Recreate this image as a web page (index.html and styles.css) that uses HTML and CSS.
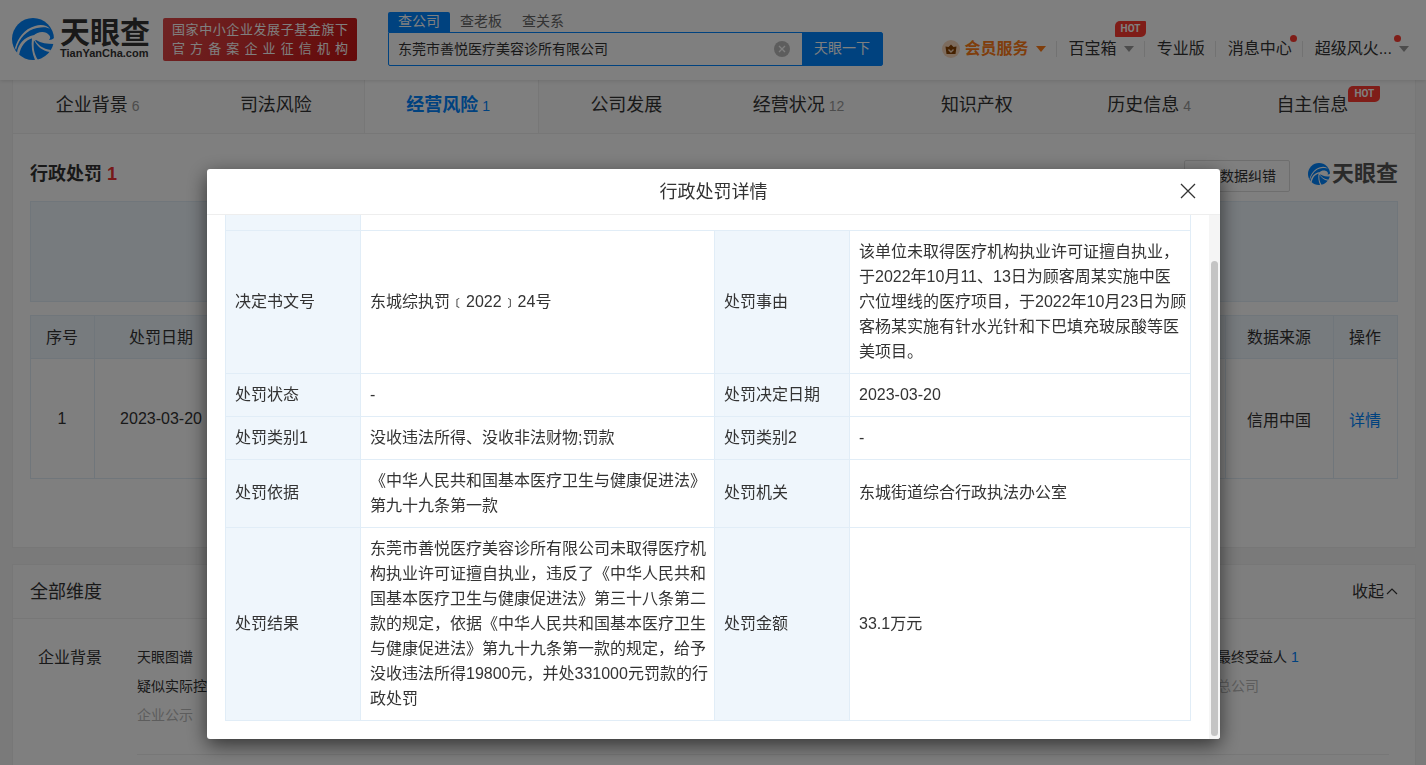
FILE: index.html
```
<!DOCTYPE html>
<html lang="zh-CN">
<head>
    <meta charset="UTF-8">
    <meta name="viewport" content="width=device-width, initial-scale=1.0">
    <title>行政处罚 - 天眼查</title>
    <link rel="stylesheet" href="styles.css">
</head>
<body>
    <svg class="symbols" aria-hidden="true">
        <symbol id="swirl" viewBox="0 0 42 42">
            <circle cx="21" cy="21" r="21" fill="#0084ff"/>
            <path d="M4 32C7 20 15 12 25 10c6-1 10-1 13 1-3-4-9-5-15-3C12 11 6 20 3 30z" fill="#fff"/>
            <path d="M21 18c5-5 13-5 16-1 2 2 1 4 0 5 2 0 4-1 5-2v6c-7 0-13-1-18-4-1 1-2 1-3 0z" fill="#fff"/>
            <path d="M21 19c4 8 10 12 18 13l-1 2c-8-1-13-6-16-12-1 7 0 14 4 20h-3c-3-7-4-14-3-22z" fill="#fff"/>
            <path d="M22 17C12 19 6 26 5 35l2 2c2-9 6-15 14-17z" fill="#fff"/>
        </symbol>
    </svg>

    <header class="header">
        <a class="logo" href="/">
            <svg class="logo-mark"><use href="#swirl"/></svg>
            <span class="logo-text">
                <b>天眼查</b>
                <small>TianYanCha.com</small>
            </span>
        </a>
        <div class="slogan">
            <p>国家中小企业发展子基金旗下</p>
            <p>官方备案企业征信机构</p>
        </div>
        <form class="search">
            <div class="search-tabs">
                <a class="active" href="#">查公司</a>
                <a href="#">查老板</a>
                <a href="#">查关系</a>
            </div>
            <div class="search-box">
                <input type="text" aria-label="搜索公司" value="东莞市善悦医疗美容诊所有限公司">
                <button class="clear" type="button" aria-label="清除">
                    <svg viewBox="0 0 16 16"><circle cx="8" cy="8" r="8" fill="#bbb"/><path d="M5 5l6 6M11 5l-6 6" stroke="#fff" stroke-width="1.3"/></svg>
                </button>
                <button class="submit" type="submit">天眼一下</button>
            </div>
        </form>
        <nav class="user-nav">
            <a class="vip" href="#">
                <svg class="crown" viewBox="0 0 18 18"><circle cx="9" cy="9" r="9" fill="#fbd9bd"/><path d="M3.500 6.500l3 .5L9 4.500 11.500 7l3-.5-1 7.500h-9z" fill="#8a4300"/><path d="M6.500 9.500L9 12l2.500-2.500" fill="none" stroke="#fbd9bd" stroke-width="1.400"/></svg>
                会员服务<i class="caret"></i>
            </a>
            <a href="#">百宝箱<i class="caret"></i><em class="hot">HOT</em></a>
            <a href="#">专业版</a>
            <a href="#">消息中心<i class="dot"></i></a>
            <a class="account" href="#">超级风火...<i class="caret"></i><i class="dot"></i></a>
        </nav>
    </header>

    <main>
        <section class="card">
            <nav class="tabs">
                <a href="#">企业背景<span>6</span></a>
                <a href="#">司法风险</a>
                <a class="active" href="#">经营风险<span>1</span></a>
                <a href="#">公司发展</a>
                <a href="#">经营状况<span>12</span></a>
                <a href="#">知识产权</a>
                <a href="#">历史信息<span>4</span></a>
                <a href="#"><span class="wrap">自主信息<em class="hot">HOT</em></span></a>
            </nav>
            <div class="block">
                <div class="block-head">
                    <h2>行政处罚 <span>1</span></h2>
                    <button class="report" type="button">数据纠错</button>
                    <div class="brand"><svg><use href="#swirl"/></svg><b>天眼查</b></div>
                </div>
                <div class="filter"></div>
                <table class="list">
                    <colgroup><col class="c-no"><col class="c-date"><col><col class="c-source"><col class="c-op"></colgroup>
                    <thead>
                        <tr><th>序号</th><th>处罚日期</th><th></th><th>数据来源</th><th>操作</th></tr>
                    </thead>
                    <tbody>
                        <tr><td>1</td><td>2023-03-20</td><td></td><td>信用中国</td><td><a href="#">详情</a></td></tr>
                    </tbody>
                </table>
            </div>
        </section>

        <section class="card all">
            <div class="all-head">
                <h3>全部维度</h3>
                <button type="button">收起<svg viewBox="0 0 12 12"><path d="M1 9l5-5 5 5" fill="none" stroke="#333" stroke-width="1.200"/></svg></button>
            </div>
            <div class="all-body">
                <h4>企业背景</h4>
                <div class="links">
                    <a href="#">天眼图谱</a>
                    <a href="#">最终受益人 <span>1</span></a>
                    <a href="#">疑似实际控制人</a>
                    <a class="off">总公司</a>
                    <a class="off">企业公示</a>
                </div>
            </div>
        </section>
    </main>

    <div class="mask">
        <div class="modal" role="dialog" aria-labelledby="modalTitle">
            <div class="modal-head">
                <h2 id="modalTitle">行政处罚详情</h2>
                <button type="button" aria-label="关闭">
                    <svg viewBox="0 0 16 16"><path d="M1 1l14 14M15 1L1 15" stroke="#333" stroke-width="1.300"/></svg>
                </button>
            </div>
            <div class="modal-body">
                <table class="detail">
                    <colgroup><col class="c-label"><col class="c-left"><col class="c-label"><col></colgroup>
                    <tr class="cut"><th></th><td colspan="3"></td></tr>
                    <tr>
                        <th>决定书文号</th><td>东城综执罚﹝2022﹞24号</td>
                        <th>处罚事由</th><td>该单位未取得医疗机构执业许可证擅自执业，<br>于2022年10月11、13日为顾客周某实施中医<br>穴位埋线的医疗项目，于2022年10月23日为顾<br>客杨某实施有针水光针和下巴填充玻尿酸等医<br>美项目。</td>
                    </tr>
                    <tr>
                        <th>处罚状态</th><td>-</td>
                        <th>处罚决定日期</th><td>2023-03-20</td>
                    </tr>
                    <tr>
                        <th>处罚类别1</th><td>没收违法所得、没收非法财物;罚款</td>
                        <th>处罚类别2</th><td>-</td>
                    </tr>
                    <tr>
                        <th>处罚依据</th><td>《中华人民共和国基本医疗卫生与健康促进法》第九十九条第一款</td>
                        <th>处罚机关</th><td>东城街道综合行政执法办公室</td>
                    </tr>
                    <tr>
                        <th>处罚结果</th><td>东莞市善悦医疗美容诊所有限公司未取得医疗机构执业许可证擅自执业，违反了《中华人民共和国基本医疗卫生与健康促进法》第三十八条第二款的规定，依据《中华人民共和国基本医疗卫生与健康促进法》第九十九条第一款的规定，给予没收违法所得19800元，并处331000元罚款的行政处罚</td>
                        <th>处罚金额</th><td>33.1万元</td>
                    </tr>
                </table>
                <div class="scrollbar"><div class="thumb"></div></div>
            </div>
        </div>
    </div>
</body>
</html>
```

FILE: styles.css
```
* {
    box-sizing: border-box;
}
body {
    margin: 0;
    height: 100vh;
    overflow: hidden;
    background: #f5f5f5;
    color: #333;
    font-family: "Liberation Sans", "Noto Sans CJK SC", sans-serif;
    font-size: 16px;
}
h2, h3, h4, p {
    margin: 0;
    font-weight: 400;
}
a {
    color: inherit;
    text-decoration: none;
}
button {
    padding: 0;
    border: 0;
    background: none;
    color: inherit;
    font: inherit;
}
table {
    border-collapse: collapse;
    table-layout: fixed;
    width: 100%;
}
th {
    font-weight: 400;
}
.symbols {
    position: absolute;
    width: 0;
    height: 0;
}

/* header */
.header {
    position: relative;
    display: flex;
    align-items: center;
    height: 80px;
    padding: 0 12px 2px;
    background: #fff;
    box-shadow: 0 1px 4px rgba(0, 0, 0, .12);
}
.logo {
    display: flex;
    align-items: center;
    gap: 6px;
}
.logo-mark {
    width: 42px;
    height: 42px;
}
.logo-text {
    display: flex;
    flex-direction: column;
    width: 91px;
}
.logo-text b {
    font-size: 30px;
    line-height: 28px;
}
.logo-text small {
    font-size: 11px;
    font-weight: 700;
    line-height: 12px;
}
.slogan {
    width: 194px;
    margin-left: 12px;
    padding: 2px 9px 3px;
    border-radius: 2px;
    background: linear-gradient(120deg, #e04848, #c91414);
    color: #fff;
    font-size: 13px;
    line-height: 19px;
    text-align-last: justify;
}
.search {
    width: 495px;
    margin-left: 31px;
    font-size: 14px;
}
.search-tabs {
    display: flex;
    color: #666;
}
.search-tabs a {
    height: 20px;
    padding: 0 10px;
    border-radius: 2px 2px 0 0;
    line-height: 18px;
}
.search-tabs .active {
    background: #0084ff;
    color: #fff;
}
.search-box {
    display: flex;
    align-items: center;
    height: 34px;
    border: 1px solid #0084ff;
    border-radius: 0 2px 2px 2px;
}
.search-box input {
    flex: 1;
    min-width: 0;
    padding: 0 9px 3px;
    border: 0;
    outline: 0;
    background: none;
    color: #333;
    font: inherit;
}
.clear {
    width: 16px;
    height: 18px;
    margin-right: 12px;
}
.clear svg {
    display: block;
    height: 16px;
}
.submit {
    width: 80px;
    height: 32px;
    padding-bottom: 4px;
    background: #0084ff;
    color: #fff;
}
.user-nav {
    display: flex;
    align-items: center;
    margin-left: auto;
    padding-top: 20px;
    line-height: 16px;
}
.user-nav a {
    position: relative;
    display: flex;
    align-items: center;
    padding: 0 10px 0 12px;
    border-left: 1px solid #e5e5e5;
}
.user-nav .vip {
    border: 0;
    color: #ff7d18;
    font-weight: 700;
}
.user-nav .account {
    padding-right: 5px;
}
.crown {
    width: 18px;
    height: 18px;
    margin-right: 5px;
}
.caret {
    margin-left: 7px;
    border: 5px solid transparent;
    border-top: 6px solid #999;
    border-bottom: 0;
}
.vip .caret {
    border-top-color: #ff7d18;
}
.hot {
    position: absolute;
    padding: 0 6px;
    border-radius: 5px 1px 5px 1px;
    background: #ff3b30;
    color: #fff;
    font: 700 10px/16px Roboto, sans-serif;
}
.user-nav .hot {
    top: -20px;
    left: 58px;
}
.dot {
    position: absolute;
    top: -6px;
    right: 5px;
    width: 7px;
    height: 7px;
    border-radius: 50%;
    background: #ff3b30;
}
.account .dot {
    right: 13px;
}

/* content */
main {
    padding: 0 10px 0 12px;
}
.card {
    margin-bottom: 16px;
    border: 1px solid #eee;
    border-top: 0;
    background: #fff;
}
.tabs {
    display: flex;
    border-bottom: 1px solid #eee;
    background: #fafafa;
}
.tabs a {
    flex: 1 1 12.5%;
    height: 53px;
    font-size: 18px;
    line-height: 50px;
    text-align: center;
}
.tabs a > span:not(.wrap) {
    margin: 0 6px 0 4px;
    color: #999;
    font-size: 14px;
}
.tabs .active {
    border: 1px solid #eee;
    border-width: 0 1px;
    background: #fff;
    color: #0084ff;
    font-weight: 700;
}
.tabs .active > span:not(.wrap) {
    color: #0084ff;
    font-weight: 400;
}
.wrap {
    position: relative;
    padding-right: 30px;
}
.tabs .hot {
    top: -9px;
    left: 72px;
}
.block {
    padding: 26px 17px 68px;
}
.block-head {
    display: flex;
    align-items: center;
    height: 32px;
    margin-bottom: 9px;
}
.block-head h2 {
    flex: 1;
    padding-bottom: 9px;
    font-size: 18px;
    font-weight: 700;
}
.block-head h2 span {
    color: #e33;
}
.report {
    width: 106px;
    height: 32px;
    padding: 0 13px 3px 0;
    border: 1px solid #ddd;
    border-radius: 2px;
    font-size: 14px;
    text-align: right;
}
.brand {
    display: flex;
    align-items: center;
    gap: 2px;
    margin-left: 18px;
    padding-bottom: 4px;
    color: #555;
    font-size: 22px;
    line-height: 24px;
}
.brand svg {
    width: 22px;
    height: 22px;
}
.filter {
    height: 101px;
    margin-bottom: 13px;
    border: 1px solid #e1edf7;
    background: #eff6fc;
}
.list th,
.list td {
    height: 120px;
    padding: 0 1px 0 0;
    border: 1px solid #e1edf7;
    text-align: center;
}
.list th {
    height: 43px;
    padding-bottom: 3px;
    background: #eff6fc;
}
.list a,
.links span {
    color: #0084ff;
}
.c-no,
.c-op {
    width: 64px;
}
.c-date {
    width: 134px;
}
.c-source {
    width: 108px;
}
.all {
    border-top: 1px solid #eee;
}
.all-head {
    display: flex;
    align-items: center;
    justify-content: space-between;
    height: 54px;
    padding: 0 17px 3px;
    border-bottom: 1px solid #eee;
    background: #fcfcfc;
}
.all-head h3 {
    font-size: 18px;
}
.all-head svg {
    width: 12px;
    height: 12px;
    margin-left: 2px;
}
.all-body {
    display: flex;
    padding: 24px 26px 24px 25px;
}
.all-body h4 {
    width: 99px;
    line-height: 29px;
}
.links {
    flex: 1;
    display: grid;
    grid-template-columns: 1fr 172px;
    padding-bottom: 24px;
    border-bottom: 1px solid #eee;
    font-size: 14px;
    line-height: 29px;
}
.off {
    color: #bbb;
}

/* modal */
.mask {
    position: fixed;
    inset: 0;
    padding: 169px 206px 0 207px;
    background: rgba(0, 0, 0, .5);
}
.modal {
    border-radius: 3px;
    overflow: hidden;
    background: #fff;
    box-shadow: 0 6px 20px rgba(0, 0, 0, .6);
}
.modal-head {
    display: flex;
    align-items: center;
    height: 46px;
    padding: 0 24px 2px 0;
    border-bottom: 1px solid #eee;
}
.modal-head h2 {
    flex: 1;
    padding: 0 0 2px 40px;
    font-size: 18px;
    text-align: center;
}
.modal-head button,
.modal-head svg {
    display: block;
    width: 16px;
    height: 16px;
}
.modal-body {
    display: flex;
    padding-left: 18px;
}
.detail {
    flex: 1;
    margin: 0 18px 18px 0;
}
.detail th,
.detail td {
    padding: 8px 3px 9px 9px;
    border: 1px solid #e1edf7;
    line-height: 25px;
    text-align: left;
}
.detail th {
    background: #eff6fc;
}
.detail .cut th,
.detail .cut td {
    height: 15px;
    padding: 0;
    border-top: 0;
}
.c-label {
    width: 135px;
}
.c-left {
    width: 354px;
}
.scrollbar {
    width: 11px;
    padding: 46px 2px 3px;
    background: #f5f5f5;
}
.thumb {
    height: 100%;
    border-radius: 4px;
    background: #c4c4c4;
}
```
